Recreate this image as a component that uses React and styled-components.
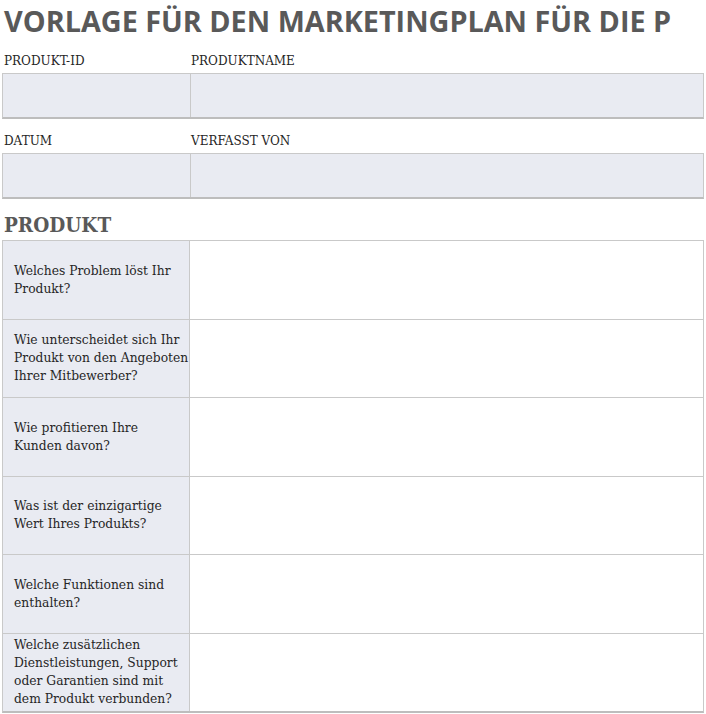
import React from 'react';
import styled, { createGlobalStyle } from 'styled-components';

const GlobalStyle = createGlobalStyle`
  body {
    margin: 0;
    background: #ffffff;
    font-family: 'DejaVu Serif', serif;
    color: #262626;
  }
`;

const Page = styled.div`
  width: 702px;
  padding: 0 2px;
  overflow: hidden;
`;

const Title = styled.h1`
  box-sizing: border-box;
  margin: 0;
  padding: 3px 0 0 2px;
  height: 39px;
  font-family: 'Open Sans', sans-serif;
  font-weight: 700;
  font-size: 28.8px;
  line-height: 36px;
  color: #595959;
  white-space: nowrap;
`;

const FieldBlock = styled.section``;

const LabelRow = styled.div`
  box-sizing: border-box;
  display: grid;
  grid-template-columns: 187px 1fr;
  height: 34px;
  align-items: end;
  padding-bottom: 5px;
`;

const Label = styled.span`
  font-size: 12px;
  line-height: 14px;
  padding-left: 2px;
  text-transform: uppercase;
  color: #262626;
`;

const FieldTable = styled.div`
  display: grid;
  grid-template-columns: 187px 1fr;
  height: 46px;
  box-sizing: border-box;
  border: 1px solid #c9c9c9;
  border-bottom: 2px solid #bdbdbd;
  background: #e9ebf2;
`;

const FieldCell = styled.div`
  & + & {
    border-left: 1px solid #c9c9c9;
  }
`;

const SectionTitle = styled.h2`
  box-sizing: border-box;
  margin: 0;
  height: 41px;
  padding: 14px 0 0 2px;
  font-family: 'DejaVu Serif Condensed', 'DejaVu Serif', serif;
  font-size: 20.5px;
  font-weight: 700;
  line-height: 24px;
  color: #595959;
`;

const QTable = styled.div`
  display: grid;
  grid-template-columns: 187px 1fr;
  border: 1px solid #c9c9c9;
  border-bottom: 2px solid #bdbdbd;
`;

const Question = styled.div`
  box-sizing: border-box;
  height: ${(p) => (p.$first ? 77.5 : 78.5)}px;
  display: flex;
  align-items: center;
  padding: 0 0 0 11px;
  background: #e9ebf2;
  font-size: 12.3px;
  line-height: 18px;
  white-space: pre-line;
  color: #262626;
  border-right: 1px solid #c9c9c9;
  border-top: ${(p) => (p.$first ? 'none' : '1px solid #c9c9c9')};
`;

const Answer = styled.div`
  box-sizing: border-box;
  height: ${(p) => (p.$first ? 77.5 : 78.5)}px;
  background: #ffffff;
  border-top: ${(p) => (p.$first ? 'none' : '1px solid #c9c9c9')};
`;

const questions = [
  'Welches Problem löst Ihr\nProdukt?',
  'Wie unterscheidet sich Ihr\nProdukt von den Angeboten\nIhrer Mitbewerber?',
  'Wie profitieren Ihre\nKunden davon?',
  'Was ist der einzigartige\nWert Ihres Produkts?',
  'Welche Funktionen sind\nenthalten?',
  'Welche zusätzlichen\nDienstleistungen, Support\noder Garantien sind mit\ndem Produkt verbunden?',
];

const Fields = ({ left, right }) => (
  <FieldBlock>
    <LabelRow>
      <Label>{left}</Label>
      <Label>{right}</Label>
    </LabelRow>
    <FieldTable>
      <FieldCell />
      <FieldCell />
    </FieldTable>
  </FieldBlock>
);

export default function App() {
  return (
    <Page>
      <GlobalStyle />
      <Title>VORLAGE FÜR DEN MARKETINGPLAN FÜR DIE P</Title>
      <Fields left="Produkt-ID" right="Produktname" />
      <Fields left="Datum" right="Verfasst von" />
      <SectionTitle>PRODUKT</SectionTitle>
      <QTable>
        {questions.map((q, i) => (
          <React.Fragment key={q}>
            <Question $first={i === 0}>{q}</Question>
            <Answer $first={i === 0} />
          </React.Fragment>
        ))}
      </QTable>
    </Page>
  );
}
